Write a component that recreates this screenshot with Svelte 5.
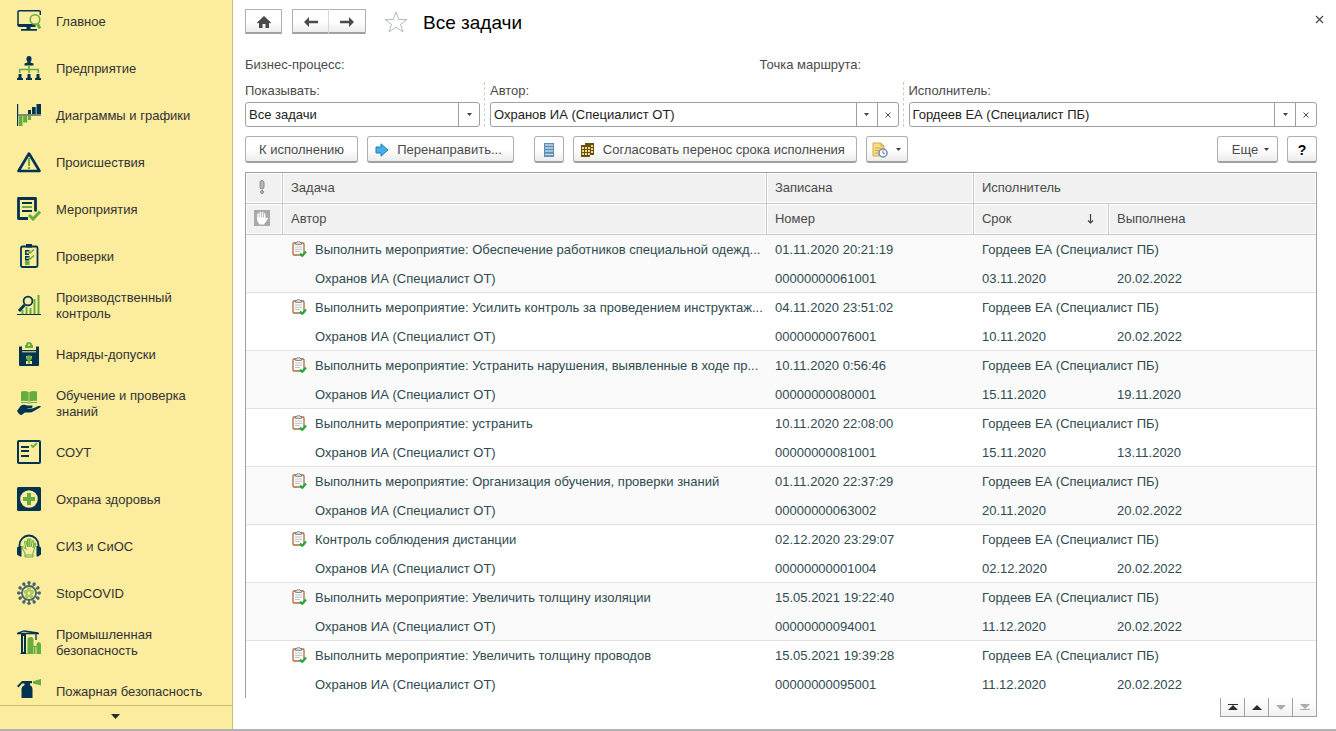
<script>
  const sections = [
    { icon: 'monitor', title: 'Главное' },
    { icon: 'company', title: 'Предприятие' },
    { icon: 'charts', title: 'Диаграммы и графики' },
    { icon: 'incident', title: 'Происшествия' },
    { icon: 'events', title: 'Мероприятия' },
    { icon: 'checks', title: 'Проверки' },
    { icon: 'production', title: 'Производственный контроль' },
    { icon: 'permits', title: 'Наряды-допуски' },
    { icon: 'training', title: 'Обучение и проверка знаний' },
    { icon: 'sout', title: 'СОУТ' },
    { icon: 'health', title: 'Охрана здоровья' },
    { icon: 'protection', title: 'СИЗ и СиОС' },
    { icon: 'covid', title: 'StopCOVID' },
    { icon: 'industry', title: 'Промышленная безопасность' },
    { icon: 'fire', title: 'Пожарная безопасность' }
  ];

  const tasks = [
    { name: 'Выполнить мероприятие: Обеспечение работников специальной одежд...', created: '01.11.2020 20:21:19', number: '00000000061001', due: '03.11.2020', done: '20.02.2022' },
    { name: 'Выполнить мероприятие: Усилить контроль за проведением инструктаж...', created: '04.11.2020 23:51:02', number: '00000000076001', due: '10.11.2020', done: '20.02.2022' },
    { name: 'Выполнить мероприятие: Устранить нарушения, выявленные в ходе пр...', created: '10.11.2020 0:56:46', number: '00000000080001', due: '15.11.2020', done: '19.11.2020' },
    { name: 'Выполнить мероприятие: устранить', created: '10.11.2020 22:08:00', number: '00000000081001', due: '15.11.2020', done: '13.11.2020' },
    { name: 'Выполнить мероприятие: Организация обучения, проверки знаний', created: '01.11.2020 22:37:29', number: '00000000063002', due: '20.11.2020', done: '20.02.2022' },
    { name: 'Контроль соблюдения дистанции', created: '02.12.2020 23:29:07', number: '00000000001004', due: '02.12.2020', done: '20.02.2022' },
    { name: 'Выполнить мероприятие: Увеличить толщину изоляции', created: '15.05.2021 19:22:40', number: '00000000094001', due: '11.12.2020', done: '20.02.2022' },
    { name: 'Выполнить мероприятие: Увеличить толщину проводов', created: '15.05.2021 19:39:28', number: '00000000095001', due: '11.12.2020', done: '20.02.2022' }
  ];

  const virus_angles = Array.from({ length: 12 }, (_, i) => i * 30);

  let show = $state('Все задачи');
  let author = $state('Охранов ИА (Специалист ОТ)');
  let performer = $state('Гордеев ЕА (Специалист ПБ)');
</script>

{#snippet caret()}
  <svg width="5" height="3" viewBox="0 0 5 3" aria-hidden="true"><path d="M0 0h5L2.5 3z" fill="#404040" /></svg>
{/snippet}

{#snippet sectionIcon(name)}
  <svg width="24" height="24" viewBox="0 0 24 24" aria-hidden="true">
    {#if name == 'monitor'}
      <path class="navy-line" d="M1 16V3a1.300 1.300 0 0 1 1.300-1.300H22a1.300 1.300 0 0 1 1.300 1.300V6" stroke-width="1.500" />
      <path class="navy" d="M.3 15h18.200v3H2.300a2 2 0 0 1-2-2zM9.500 18h4v2h-4zM4 20h16v1.800H4z" />
      <circle class="green-line" cx="18" cy="10.500" r="4.800" stroke-width="1.500" />
      <path class="green-line" d="M20.500 15l2.500 4.500" stroke-width="3" />
    {:else if name == 'company'}
      <ellipse class="navy" cx="12" cy="3" rx="2.600" ry="3" />
      <path class="navy" d="M10.500 4h3v2.500l3 1v2h-9v-2l3-1z" />
      <path class="green-line" d="M12 9.500V17M2.700 17v-3.500h18.600V17" stroke-width="1.600" />
      {#each [3, 12, 21] as x}
        <path class="navy" d="M{x - 1.500} 18h3v3.500l1.500.8V24h-6v-1.700l1.500-.8z" />
      {/each}
    {:else if name == 'charts'}
      <path class="navy" d="M0 1h1.200v22H0zM11 7h3v4h-3zM15 4h3.700v7H15zM19.500 1H24v10h-4.500z" />
      <path fill="#7f8c74" d="M1 11h23v2H1z" />
      <path class="green" d="M2 13h3.500v10H2zM6.200 13h4v6.500h-4zM11 13h3v4h-3z" />
    {:else if name == 'incident'}
      <path class="navy-line" d="M12 3.500L22.500 21h-21z" stroke-width="2.600" stroke-linejoin="round" />
      <path class="green" d="M11 8h2v8h-2zM11 17h2v2h-2z" />
    {:else if name == 'events'}
      <path class="navy-line" d="M11 21.500H1.500v-20h17v13" stroke-width="2.800" stroke-linejoin="round" />
      <path class="navy" d="M5 5h10v2H5zM5 13h10v2H5z" />
      <path class="green" d="M5 9h10v2H5z" />
      <path class="green-line" d="M12 18l4 4 7-7.500" stroke-width="3" />
    {:else if name == 'checks'}
      <rect class="navy-line" x="4" y="2.500" width="16.500" height="20.500" rx="1.500" stroke-width="1.800" />
      <path class="navy" d="M9 0h6v3.500H9zM8 6h4.500v1.500H9.500v2H12V11H8zM8 12h4.500v1.500H9.500v1.500H12v1.500H8z" />
      <path class="green-line" d="M11 7.500l2 1.500 4-3.500M11 13.500l2 1.500 4-3.500" stroke-width="1.600" />
      <rect class="green" x="8" y="17" width="4.500" height="4" />
    {:else if name == 'production'}
      <path class="green" d="M4.500 17h2v4h-2zM8.500 14h2v7h-2zM12.500 15h2v6h-2zM16.500 6h2v15h-2zM20.500 2h2v19h-2z" />
      <circle class="ground" cx="11" cy="8" r="5.500" />
      <circle class="navy-line" cx="11" cy="8" r="4.400" stroke-width="1.800" />
      <path class="navy-line" d="M7.500 12L2 18" stroke-width="2.800" />
      <path class="navy" d="M0 21h24v1H0z" />
    {:else if name == 'permits'}
      <path class="navy" d="M2 4.500h3V8h14V4.500h3V23a1 1 0 0 1-1 1H3a1 1 0 0 1-1-1z" />
      <path class="ground" d="M5 9.300h14v1H5z" />
      <path class="green" d="M8 7V4h1.200a2.900 2.900 0 0 1 5.600 0H16v3z" transform="translate(0 -1)" />
      <path class="green" d="M9 4V3a3 3 0 0 1 6 0v1z" />
      <circle class="ground" cx="12" cy="3" r="1" />
      <path class="ground" d="M9 14h6v2.500H9zM9 19h6v3H9z" />
      <circle class="green" cx="12" cy="16" r="2.800" />
      <path class="green" d="M10.800 18h2.400v3.500h-2.400z" />
    {:else if name == 'training'}
      <path class="green" d="M4 .5Q8-.5 11.700 1v9.500Q8 9.500 4 10zM12.300 1Q16-.5 20 .5V10q-4-.5-7.700.5z" />
      <path class="green-line" d="M4 11.500q4-.5 8 .5 4-1 8-.5" stroke-width="1" />
      <path class="navy" d="M0 20l3.500-5q3-2 6.500-.5h5q1.500 1-.5 2.500h-4v.5h5l6-2.500q2.500-.5 2.300 1L17 20q-2 1.500-5 1.500H8L4.500 24q-2 .5-4.500-4z" />
    {:else if name == 'sout'}
      <rect class="navy-line" x="1" y="1" width="22" height="22" rx="1" stroke-width="2" />
      <path class="navy" d="M4 6h8v2H4zM4 10h8v2H4zM4 15h8v2H4z" />
      <path class="green-line" d="M14 5l2 2 4-4" stroke-width="1.800" />
    {:else if name == 'health'}
      <rect class="navy" width="24" height="24" rx="1.500" />
      <circle class="ground" cx="12" cy="12" r="8.800" />
      <path class="green" d="M10 6h4v4h4v4h-4v4h-4v-4H6v-4h4z" />
    {:else if name == 'protection'}
      <path class="navy-line" d="M2.500 15V11a9.500 9.500 0 0 1 19 0v4" stroke-width="1.800" />
      <path class="navy" d="M0 13.500l3-1.500h1.500v10.500H3L0 20.500zM24 13.500l-3-1.500h-1.500v10.500H21l3-2z" />
      <path class="green-line" d="M8 23v-4L4.800 13l1.500-.5L9 15.500 7.500 7.500 9 7l1.500 6V5h1.500v8l.5-8H14v8l1.500-6.500 1.500.5-1 7 2-5 1 .5L16 19v4zM8 21h8" stroke-width="1" />
    {:else if name == 'covid'}
      <circle fill="none" stroke="#48656b" cx="12" cy="12" r="7" stroke-width="1.800" />
      {#each virus_angles as angle}
        <g transform="rotate({angle} 12 12)">
          <path stroke="#48656b" stroke-width="1.400" d="M12 5V2" />
          <circle fill="#48656b" cx="12" cy="1.700" r="1.700" />
        </g>
      {/each}
      <g fill="none" stroke="#8bbd46" stroke-width="1.200">
        <circle cx="12" cy="8.500" r="1.300" /><circle cx="15" cy="11" r="1.300" /><circle cx="14" cy="15" r="1.300" />
        <circle cx="10" cy="15" r="1.300" /><circle cx="9" cy="11" r="1.300" />
      </g>
    {:else if name == 'industry'}
      <path class="navy" d="M4 4h5v19.500h1V24H3v-.5h1z" />
      <path class="navy-line" d="M0 3.500h22M1 3l6-2 14 2M19 3v7" stroke-width="1.300" />
      <path class="ground" d="M6 6h1v16H6z" />
      <path class="green" d="M10.500 24V10a3 3 0 0 1 6 0v14zM17 24v-8h1.500v8zM19.500 24V14.500a2.200 2.200 0 0 1 4.500 0V24z" />
      <path class="green-line" d="M16 16.500h4" stroke-width="1.200" />
    {:else if name == 'fire'}
      <path class="navy" d="M5 2h10v2.200h-2V6q2.500 1.500 2.500 4v9h-11v-9q0-2.500 3-4V4.500H5L1.500 8.500 0 7z" />
      <path class="green" d="M16 2.200L24 0v6.500l-8-2z" />
    {/if}
  </svg>
{/snippet}

<div class="shell">
  <nav class="sidebar">
    <ul>
      {#each sections as section}
        <li>
          <a href="#{section.icon}">
            {@render sectionIcon(section.icon)}
            <span>{section.title}</span>
          </a>
        </li>
      {/each}
    </ul>
    <button class="scroll-down" aria-label="Прокрутить вниз">
      <svg width="9" height="5" viewBox="0 0 9 5"><path d="M0 0h9L4.500 5z" fill="#2b2b2b" /></svg>
    </button>
  </nav>

  <main>
    <header>
      <button class="btn square" aria-label="Начальная страница">
        <svg width="14" height="12" viewBox="0 0 14 12"><path d="M7 0l7 6.500-1 1-1-.8V12H8.500V8h-3v4H2V6.700l-1 .8-1-1z" fill="#4a4a4a" /></svg>
      </button>
      <div class="history">
        <button class="btn square" aria-label="Назад">
          <svg width="14" height="10" viewBox="0 0 14 10"><path d="M5 0v3.800h9v2.400H5V10L0 5z" fill="#4a4a4a" /></svg>
        </button>
        <button class="btn square" aria-label="Вперед">
          <svg width="14" height="10" viewBox="0 0 14 10"><path d="M9 0v3.800H0v2.400h9V10l5-5z" fill="#4a4a4a" /></svg>
        </button>
      </div>
      <button aria-label="В избранное">
        <svg width="24" height="22" viewBox="0 0 24 22"><path d="M12 1l2.800 7.500H23l-6.500 4.800L19 21l-7-4.700L5 21l2.500-7.700L1 8.500h8.200z" fill="#fff" stroke="#b4bac0" /></svg>
      </button>
      <h1>Все задачи</h1>
      <button class="close" aria-label="Закрыть">
        <svg width="9" height="9" viewBox="0 0 9 9"><path d="M1 1l7 7M8 1L1 8" stroke="#4a4a4a" stroke-width="1.200" /></svg>
      </button>
    </header>

    <div class="process">
      <span>Бизнес-процесс:</span>
      <span>Точка маршрута:</span>
    </div>

    <div class="filters">
      <div class="filter">
        <label for="show">Показывать:</label>
        <div class="field">
          <select id="show" bind:value={show}>
            <option>Все задачи</option>
            <option>Невыполненные</option>
          </select>
          <span class="select-caret">{@render caret()}</span>
        </div>
      </div>
      <div class="filter">
        <label for="author">Автор:</label>
        <div class="field">
          <input id="author" type="text" bind:value={author} />
          <button aria-label="Выбрать автора">{@render caret()}</button>
          <button aria-label="Очистить автора" onclick={() => (author = '')}>
            <svg width="6" height="6" viewBox="0 0 6 6"><path d="M.5.5l5 5M5.500.5l-5 5" stroke="#4a4a4a" /></svg>
          </button>
        </div>
      </div>
      <div class="filter">
        <label for="performer">Исполнитель:</label>
        <div class="field">
          <input id="performer" type="text" bind:value={performer} />
          <button aria-label="Выбрать исполнителя">{@render caret()}</button>
          <button aria-label="Очистить исполнителя" onclick={() => (performer = '')}>
            <svg width="6" height="6" viewBox="0 0 6 6"><path d="M.5.5l5 5M5.500.5l-5 5" stroke="#4a4a4a" /></svg>
          </button>
        </div>
      </div>
    </div>

    <div class="commands">
      <button class="btn wide">К исполнению</button>
      <button class="btn with-icon">
        <svg width="14" height="14" viewBox="0 0 14 14"><path d="M1 4h5V.8L13 7l-7 6.200V10H1z" fill="#46aeea" stroke="#2c7db0" /></svg>
        <span>Перенаправить...</span>
      </button>
      <button class="btn list" aria-label="Список">
        <svg width="10" height="14" viewBox="0 0 10 14">
          <path d="M0 0h10v14H0z" fill="#5d8db3" />
          <path d="M1 2h8M1 5h8M1 8h8M1 11.500h8" stroke="#bcd8ec" stroke-width="1.500" />
        </svg>
      </button>
      <button class="btn with-icon">
        <svg width="14" height="14" viewBox="0 0 14 14">
          <path d="M0 2h4V0h9v12H9v2H0z" fill="#6b4f10" />
          <path d="M1 4h2v2H1zM4 4h2v2H4zM7 4h2v2H7zM1 7h2v2H1zM4 7h2v2H4zM7 7h2v2H7zM1 10h2v2H1zM4 10h2v2H4zM7 10h2v2H7zM10 2h2v2h-2zM10 5h2v2h-2zM10 8h2v2h-2z" fill="#ecd68a" />
        </svg>
        <span>Согласовать перенос срока исполнения</span>
      </button>
      <button class="btn report" aria-label="Отчеты">
        <svg width="16" height="16" viewBox="0 0 16 16">
          <path d="M1 1h8l3 3v10H1z" fill="#f7dc86" stroke="#d3ac4a" />
          <path d="M9 1v3h3M3 6h6M3 8.500h5M3 11h3" fill="none" stroke="#d3ac4a" />
          <circle cx="11" cy="11" r="4" fill="#fff" stroke="#5b8fc4" stroke-width="1.500" />
          <path d="M11 8.500V11l2 1" fill="none" stroke="#d04a3a" />
        </svg>
        {@render caret()}
      </button>
      <button class="btn more">Еще {@render caret()}</button>
      <button class="btn help">?</button>
    </div>

    <div class="list-view">
      <table>
        <colgroup>
          <col class="col-mark" />
          <col />
          <col class="col-created" />
          <col class="col-due" />
          <col class="col-done" />
        </colgroup>
        <thead>
          <tr>
            <th class="mark" aria-label="Важность">
              <svg width="6" height="14" viewBox="0 0 6 14"><rect x="1" y=".5" width="4" height="8.500" rx="2" fill="#b5b5b5" stroke="#8c8c8c" /><circle cx="3" cy="12" r="1.500" fill="#b5b5b5" stroke="#8c8c8c" /></svg>
            </th>
            <th>Задача</th>
            <th>Записана</th>
            <th colspan="2">Исполнитель</th>
          </tr>
          <tr>
            <th class="mark" aria-label="Принята">
              <svg width="16" height="16" viewBox="0 0 16 16">
                <path d="M0 0h16v16H0z" fill="#a9a9a9" />
                <path d="M4 9V4M6.200 8V2.500M8.500 8V2.500M10.700 8.500V4" stroke="#fff" stroke-width="1.500" stroke-linecap="round" />
                <path d="M3.300 7.500h8.200v1.500L13 7.500l1.200.7L11 13l-1 1.500H5.500L3.300 11z" fill="#fff" />
              </svg>
            </th>
            <th>Автор</th>
            <th>Номер</th>
            <th>
              <div class="sorted">
                Срок
                <svg width="7" height="10" viewBox="0 0 7 10"><path d="M3.500 0v9M1 6.500L3.500 9 6 6.500" fill="none" stroke="#404040" stroke-width="1.200" /></svg>
              </div>
            </th>
            <th>Выполнена</th>
          </tr>
        </thead>
        {#each tasks as task}
          <tbody>
            <tr>
              <td></td>
              <td class="name">
                <div class="task">
                  <svg width="15" height="16" viewBox="0 0 15 16" aria-hidden="true">
                    <rect x="1" y="2" width="11" height="12" rx="1" fill="#fff" stroke="#b06a3c" stroke-width="1.300" />
                    <path d="M3.500 3.500v-2H5a1.500 1.500 0 0 1 3 0h1.500v2z" fill="#d8d8d8" stroke="#777" stroke-width=".8" />
                    <path d="M3 6h7M3 8.300h7M3 10.600h5" stroke="#b9b9c4" />
                    <path d="M8 12.500l2.300 2.300L14 10.500" fill="none" stroke="#22ab3a" stroke-width="2.200" />
                  </svg>
                  <span>{task.name}</span>
                </div>
              </td>
              <td>{task.created}</td>
              <td colspan="2">Гордеев ЕА (Специалист ПБ)</td>
            </tr>
            <tr>
              <td></td>
              <td class="author">Охранов ИА (Специалист ОТ)</td>
              <td>{task.number}</td>
              <td>{task.due}</td>
              <td>{task.done}</td>
            </tr>
          </tbody>
        {/each}
      </table>
    </div>
    <div class="pager">
      <button aria-label="В начало"><svg width="10" height="6" viewBox="0 0 10 6"><path d="M0 0h10v1H0zM5 1l5 5H0z" fill="#2b2b2b" /></svg></button>
      <button aria-label="Вверх"><svg width="10" height="5" viewBox="0 0 10 5"><path d="M5 0l5 5H0z" fill="#2b2b2b" /></svg></button>
      <button aria-label="Вниз" disabled><svg width="10" height="5" viewBox="0 0 10 5"><path d="M0 0h10L5 5z" fill="#acacac" /></svg></button>
      <button aria-label="В конец" disabled><svg width="10" height="6" viewBox="0 0 10 6"><path d="M0 0h10L5 5zM0 5h10v1H0z" fill="#acacac" /></svg></button>
    </div>
  </main>
</div>

<style>
  :global(body) {
    background: #fff;
  }

  .shell {
    display: flex;
    box-sizing: border-box;
    height: 100vh;
    border-bottom: 2px solid #b2b2b2;
    font-family: 'Liberation Sans', Arial, sans-serif;
    font-size: 13px;
    line-height: 16px;
    color: #4a4a4a;
  }

  button, input, select {
    font: inherit;
    color: inherit;
    margin: 0;
    padding: 0;
    border: 0;
    background: none;
  }

  svg {
    display: block;
    flex: none;
  }

  .sidebar {
    flex: none;
    display: flex;
    flex-direction: column;
    box-sizing: border-box;
    width: 233px;
    background: #fbec9e;
    border-right: 1px solid #c9bd7e;
    color: #333;
  }

  .sidebar ul {
    flex: 1;
    min-height: 0;
    overflow: hidden;
    display: flex;
    flex-direction: column;
    gap: 19px;
    margin: 0;
    padding: 7px 16px 0 17px;
    list-style: none;
  }

  .sidebar a {
    display: flex;
    align-items: center;
    gap: 15px;
    min-height: 28px;
    color: inherit;
    text-decoration: none;
  }

  .sidebar a span {
    max-width: 150px;
    margin: 1px 0 -1px;
  }

  .navy { fill: #003350; }
  .green { fill: #66ad40; }
  .ground { fill: #fbec9e; }
  .navy-line { fill: none; stroke: #003350; }
  .green-line { fill: none; stroke: #66ad40; }

  .scroll-down {
    flex: none;
    display: flex;
    align-items: center;
    justify-content: center;
    height: 24px;
    padding: 0 2px 2px 0;
    border-top: 1px solid #c9bd7e;
  }

  main {
    flex: 1;
    min-width: 0;
    display: flex;
    flex-direction: column;
    padding: 9px 19px 12px 12px;
  }

  header {
    display: flex;
    align-items: center;
    height: 25px;
    margin-bottom: 23px;
  }

  h1 {
    flex: 1;
    margin: 0 0 0 15px;
    padding-top: 2px;
    font-size: 19px;
    line-height: 24px;
    font-weight: normal;
    color: #000;
  }

  .btn {
    display: flex;
    align-items: center;
    justify-content: center;
    box-sizing: border-box;
    height: 27px;
    padding-top: 1px;
    border: 1px solid #b0b0b0;
    border-bottom: 2px solid #a0a0a0;
    border-radius: 3px;
    background: linear-gradient(#fff 50%, #ededed);
    white-space: nowrap;
  }

  .btn.square {
    width: 37px;
    height: 25px;
    border-radius: 1px;
  }

  .history {
    display: flex;
    margin: 0 18px 0 10px;
  }

  .history .btn + .btn {
    border-left: 0;
  }

  .history .btn:first-child {
    border-right-color: #d8d8d8;
  }

  .close {
    margin: 0 -7px 4px 0;
  }

  .process {
    display: grid;
    grid-template-columns: 48% 1fr;
    margin-bottom: 9px;
  }

  .filters {
    display: grid;
    grid-template-columns: 235px 1fr 1fr;
    gap: 10px;
    margin-bottom: 9px;
  }

  .filter {
    position: relative;
    display: flex;
    flex-direction: column;
    gap: 3px;
    min-width: 0;
    padding-top: 1px;
  }

  .filter + .filter::before {
    content: '';
    position: absolute;
    top: 0;
    bottom: 0;
    left: -6px;
    border-left: 1px dashed #ccc;
  }

  .field {
    position: relative;
    display: flex;
    box-sizing: border-box;
    height: 25px;
    border: 1px solid #a0a0a0;
    border-radius: 3px;
    color: #222;
  }

  .field input,
  .field select {
    flex: 1;
    min-width: 0;
    padding: 0 3px;
    appearance: none;
    outline: none;
  }

  .field button,
  .select-caret {
    display: flex;
    align-items: center;
    justify-content: center;
    width: 21px;
    box-sizing: border-box;
    border-left: 1px solid #a0a0a0;
  }

  .select-caret {
    position: absolute;
    top: 0;
    right: 0;
    bottom: 0;
    pointer-events: none;
  }

  .commands {
    display: flex;
    margin-bottom: 9px;
  }

  .btn.wide { padding-left: 13px; padding-right: 13px; }
  .btn.with-icon { gap: 8px; margin-left: 9px; padding-left: 7px; padding-right: 11px; }
  .btn.list { width: 30px; margin-left: 20px; }
  .btn.report { width: 42px; gap: 8px; margin-left: 9px; }
  .btn.more { width: 61px; gap: 6px; margin-left: auto; padding-left: 6px; }
  .btn.help { width: 30px; margin-left: 9px; font-size: 14px; font-weight: bold; color: #000; }

  .list-view {
    flex: 1;
    min-height: 0;
    overflow: hidden;
    border: 1px solid #a0a0a0;
    border-bottom: 0;
  }

  table {
    width: 100%;
    table-layout: fixed;
    border-collapse: separate;
    border-spacing: 0;
  }

  .col-mark { width: 37px; }
  .col-created { width: 207px; }
  .col-due { width: 135px; }
  .col-done { width: 207px; }

  th {
    box-sizing: border-box;
    height: 31px;
    padding: 0 8px;
    font-weight: normal;
    text-align: left;
    background: #f1f1f1;
    border-right: 1px solid #c8c8c8;
    border-bottom: 1px solid #c8c8c8;
    box-shadow: inset 0 0 0 1px #fff;
  }

  th:last-child {
    border-right: 0;
  }

  th.mark {
    padding: 0 4px 2px 0;
  }

  th.mark svg {
    margin: 0 auto;
  }

  .sorted {
    display: flex;
    align-items: center;
    justify-content: space-between;
    padding-right: 6px;
  }

  td {
    box-sizing: border-box;
    height: 29px;
    padding: 0 8px;
    color: #2f4a50;
    white-space: nowrap;
  }

  td.name {
    padding-right: 0;
  }

  tbody:nth-of-type(odd) td {
    background: #fafafa;
  }

  tbody tr:last-child td {
    padding-top: 1px;
    border-bottom: 1px solid #e2e2e2;
  }

  .task {
    display: flex;
    align-items: center;
    gap: 8px;
    padding-left: 1px;
  }

  .task svg {
    margin-bottom: 2px;
  }

  .task span {
    overflow: hidden;
    text-overflow: ellipsis;
  }

  td.author {
    padding-left: 32px;
  }

  .pager {
    align-self: flex-end;
    display: flex;
    height: 19px;
    border: 1px solid #a0a0a0;
    border-top: 0;
    box-sizing: border-box;
  }

  .pager button {
    display: flex;
    align-items: center;
    justify-content: center;
    box-sizing: border-box;
    width: 24px;
    background: linear-gradient(#fff, #f1f1f1);
  }

  .pager button:first-child {
    width: 23px;
  }

  .pager button + button {
    border-left: 1px solid #a0a0a0;
  }
</style>
